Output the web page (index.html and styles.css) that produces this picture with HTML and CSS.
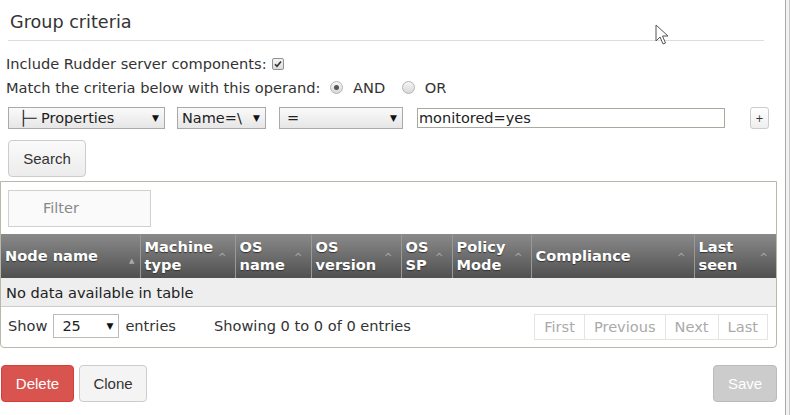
FILE: index.html
```html
<!DOCTYPE html>
<html>
<head>
  <title>Group criteria</title>
  <link rel="stylesheet" href="styles.css">
</head>
<body>
  <div class="page">
    <div class="main">
      <h2 class="title">Group criteria</h2>

      <div class="line first">Include Rudder server components: <span class="checkbox"><svg width="8" height="8" viewBox="0 0 8 8"><path d="M1 4.2 L3 6.3 L7 1.5" fill="none" stroke="#333" stroke-width="1.6"/></svg></span></div>
      <div class="line">Match the criteria below with this operand: <span class="radio checked"></span>AND <span class="radio second"></span>OR</div>

      <div class="criteria-row">
        <div class="select sel-object"><span>├─ Properties</span><span class="arrow">▼</span></div>
        <div class="select sel-attr"><span>Name=\</span><span class="arrow">▼</span></div>
        <div class="select sel-comp"><span>=</span><span class="arrow">▼</span></div>
        <div class="text-input">monitored=yes</div>
        <button class="btn-plus">+</button>
      </div>

      <button class="btn btn-default btn-search">Search</button>

      <div class="table-box">
        <div class="filter-bar">
          <div class="filter">Filter</div>
        </div>
        <table class="nodes">
          <thead>
            <tr>
              <th class="c1">Node name<span class="sort up">▲</span></th>
              <th class="c2">Machine type<span class="sort">^</span></th>
              <th class="c3">OS name<span class="sort">^</span></th>
              <th class="c4">OS version<span class="sort">^</span></th>
              <th class="c5">OS SP<span class="sort">^</span></th>
              <th class="c6">Policy Mode<span class="sort">^</span></th>
              <th class="c7">Compliance<span class="sort">^</span></th>
              <th class="c8">Last seen<span class="sort">^</span></th>
            </tr>
          </thead>
          <tbody>
            <tr><td colspan="8">No data available in table</td></tr>
          </tbody>
        </table>
        <div class="table-footer">
          <div class="length">Show <div class="select sel-length"><span>25</span><span class="arrow">▼</span></div> entries</div>
          <div class="info">Showing 0 to 0 of 0 entries</div>
          <div class="paging">
            <span>First</span><span>Previous</span><span>Next</span><span>Last</span>
          </div>
        </div>
      </div>

      <div class="actions">
        <button class="btn btn-danger">Delete</button>
        <button class="btn btn-default btn-clone">Clone</button>
        <button class="btn btn-save">Save</button>
      </div>
    </div>
    <div class="side-border"></div>
  </div>

  <svg class="cursor" width="14" height="22" viewBox="0 0 14 22">
    <path d="M1 1 L1 17 L5 13 L8 20 L10.5 19 L7.5 12 L13 12 Z" fill="#fff" stroke="#555" stroke-width="1"/>
  </svg>
</body>
</html>
```

FILE: styles.css
```css
body {
  margin: 0;
  padding: 0;
  background-color: #fff;
  font-family: "DejaVu Sans", Verdana, sans-serif;
  font-size: 14.6px;
  color: #333;
}

.page {
  display: flex;
  width: 800px;
  height: 415px;
  overflow: hidden;
}

.main {
  width: 776px;
  margin-left: 1px;
}

.side-border {
  width: 3px;
  margin-left: 8px;
  border-left: 1px solid #a8a8a8;
  border-right: 1px solid #c8c8c8;
  background-color: #f2f2f2;
}

.title {
  margin: 0 13px 0 7px;
  padding: 11px 2px 7px;
  font-size: 17.6px;
  font-weight: normal;
  line-height: 22px;
  color: #333;
  border-bottom: 1px solid #ddd;
}

.line {
  height: 24px;
  line-height: 24px;
  padding-left: 5px;
  white-space: nowrap;
}
.line.first {
  margin-top: 11px;
}

.checkbox {
  display: inline-flex;
  align-items: center;
  justify-content: center;
  vertical-align: middle;
  width: 10px;
  height: 10px;
  margin: -3px 0 0 1px;
  border: 1px solid #8f8f8f;
  border-radius: 2px;
  background: linear-gradient(#f4f4f4, #dcdcdc);
}

.radio {
  display: inline-flex;
  align-items: center;
  justify-content: center;
  vertical-align: middle;
  width: 11px;
  height: 11px;
  margin: -3px 10px 0 5px;
  border: 1px solid #b4b4b4;
  border-radius: 50%;
  background: linear-gradient(#f6f6f6, #d8d8d8);
}
.radio.checked::after {
  content: "";
  width: 5px;
  height: 5px;
  border-radius: 50%;
  background-color: #555;
}
.radio.second {
  margin-left: 12px;
}

.criteria-row {
  display: flex;
  align-items: center;
  height: 22px;
  margin-top: 7px;
  padding-left: 7px;
}

.select {
  display: flex;
  align-items: center;
  justify-content: space-between;
  box-sizing: border-box;
  height: 22px;
  padding: 0 5px 0 4px;
  border: 1px solid #a9a9a9;
  background: linear-gradient(#fafafa, #e6e6e6);
  color: #222;
  font-size: 14.5px;
  white-space: nowrap;
}
.select .arrow {
  font-size: 9px;
  color: #111;
}
.sel-object { width: 157px; padding-left: 10px; }
.sel-attr { width: 89px; margin-left: 12px; overflow: hidden; }
.sel-comp { width: 124px; margin-left: 13px; padding-left: 7px; }

.text-input {
  box-sizing: border-box;
  width: 308px;
  height: 20px;
  margin-left: 14px;
  padding-left: 1px;
  border: 1px solid #a9a9a0;
  background-color: #fff;
  font-size: 14.5px;
  line-height: 18px;
  color: #222;
}

.btn-plus {
  width: 19px;
  height: 22px;
  margin-left: 25px;
  padding: 0;
  border: 1px solid #ccc;
  border-radius: 3px;
  background: linear-gradient(#fff, #eee);
  font-family: "DejaVu Sans", sans-serif;
  font-size: 10px;
  color: #333;
}

.btn {
  height: 37px;
  padding: 0 14px;
  border: 1px solid #ccc;
  border-radius: 4px;
  font-family: "Liberation Sans", Arial, sans-serif;
  font-size: 15px;
  cursor: pointer;
}
.btn-default {
  background-color: #f4f4f4;
  color: #333;
}
.btn-search {
  display: block;
  width: 78px;
  margin: 11px 0 0 7px;
  padding: 0;
  background: linear-gradient(#fafafa, #ececec);
}

.table-box {
  margin-top: 4px;
  margin-left: -1px;
  border: 1px solid #b8b8aa;
  border-radius: 0 0 4px 4px;
}

.filter-bar {
  padding: 8px 7px 7px;
}
.filter {
  box-sizing: border-box;
  width: 143px;
  height: 37px;
  padding-left: 34px;
  border: 1px solid #d0d0d0;
  background-color: #fafafa;
  color: #888;
  font-size: 14.5px;
  line-height: 35px;
}

.nodes {
  width: 100%;
  border-collapse: collapse;
  table-layout: fixed;
}
.nodes th {
  position: relative;
  height: 44px;
  padding: 0 16px 0 4px;
  box-sizing: border-box;
  border-left: 1px solid #999;
  background: linear-gradient(#8a8a8a, #505050);
  color: #fff;
  font-size: 14.6px;
  font-weight: bold;
  line-height: 18px;
  text-align: left;
  text-shadow: 0 1px 1px #333;
  vertical-align: middle;
}
.nodes th:first-child {
  border-left: none;
}
.nodes .sort {
  position: absolute;
  right: 8px;
  top: 15px;
  color: #aaa;
  font-size: 10px;
  font-weight: normal;
  text-shadow: none;
}
.nodes .sort.up {
  font-size: 7px;
  top: 18px;
  right: 5px;
}
.c1 { width: 139px; }
.c2 { width: 95px; }
.c3 { width: 76px; }
.c4 { width: 90px; }
.c5 { width: 51px; }
.c6 { width: 79px; }
.c7 { width: 163px; }
.nodes td {
  height: 28px;
  padding: 0 5px;
  background-color: #eee;
  border-bottom: 1px solid #ccc;
  font-size: 14.6px;
  color: #222;
}

.table-footer {
  display: flex;
  align-items: center;
  box-sizing: border-box;
  height: 40px;
  padding: 0 8px 3px 7px;
  font-size: 14.6px;
  color: #333;
}
.length {
  display: flex;
  align-items: center;
  white-space: nowrap;
}
.sel-length {
  width: 66px;
  height: 24px;
  margin: 0 6px;
  padding-left: 8px;
  background: #fff;
  border-color: #bbb;
}
.info {
  margin-left: 38px;
}
.paging {
  display: flex;
  margin-left: auto;
  margin-top: 3px;
  border: 1px solid #e4e4e4;
}
.paging span {
  padding: 0 9px;
  height: 24px;
  line-height: 24px;
  color: #aaa;
  font-size: 14.6px;
  border-left: 1px solid #e4e4e4;
}
.paging span:first-child {
  border-left: none;
}

.actions {
  display: flex;
  gap: 5px;
  margin-top: 17px;
}
.btn-danger {
  width: 73px;
  padding: 0;
  border-color: #d43f3a;
  background-color: #d9534f;
  color: #fff;
}
.btn-clone {
  width: 68px;
  padding: 0;
}
.btn-save {
  margin-left: auto;
  width: 64px;
  padding: 0;
  border-color: #bbb;
  background-color: #ccc;
  color: #fff;
}

.cursor {
  position: absolute;
  left: 655px;
  top: 24px;
}
```
